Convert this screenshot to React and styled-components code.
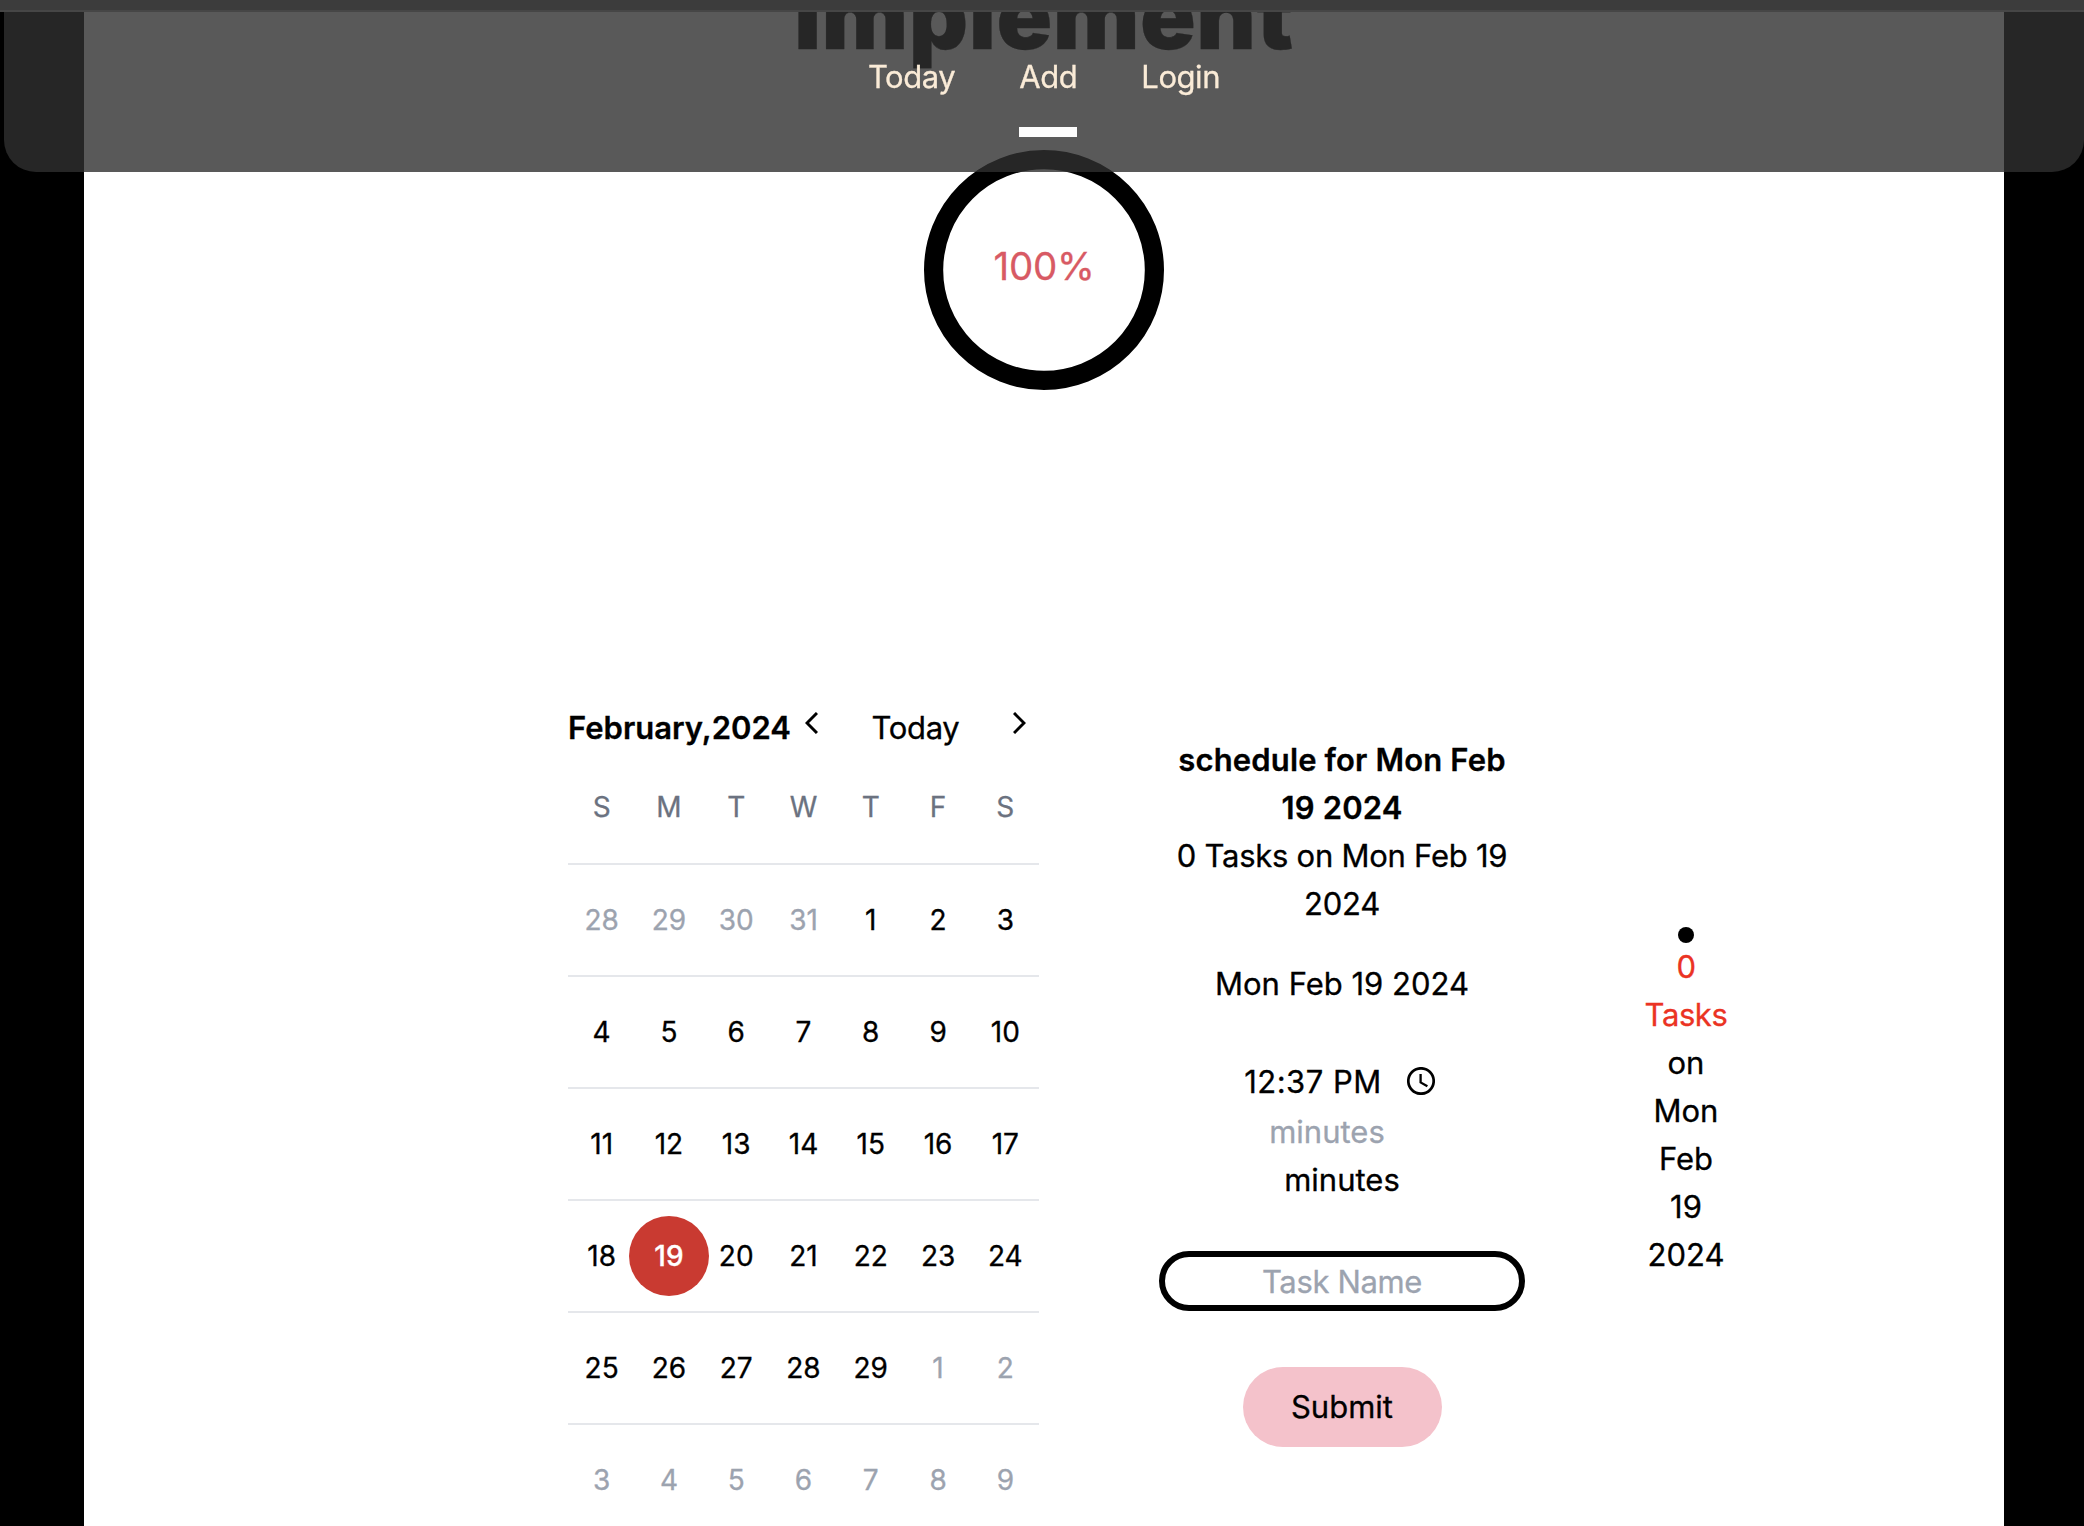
import React from "react";
import styled, { createGlobalStyle, css } from "styled-components";

const GlobalStyle = createGlobalStyle`
  * { box-sizing: border-box; }
  body {
    margin: 0;
    background: #000;
    color: #000;
    font-family: Inter, "Liberation Sans", sans-serif;
    font-size: 31px;
    line-height: 48px;
    -webkit-text-stroke: 0.3px currentColor;
  }
  button, input { font: inherit; letter-spacing: inherit; color: inherit; margin: 0; }
`;

const Page = styled.div`
  height: 1526px;
  padding: 0 80px 0 84px;
  overflow: hidden;
  background: #000;
`;

const Main = styled.main`
  height: 1526px;
  background: #fff;
`;

const WindowEdge = styled.div`
  position: fixed;
  inset: 0 0 auto 0;
  height: 12px;
  background: #3c3c3c;
  border-bottom: 2px solid #464646;
  z-index: 3;
`;

const Nav = styled.nav`
  position: fixed;
  top: 12px;
  left: 4px;
  right: 0;
  height: 160px;
  padding-top: 41px;
  display: flex;
  justify-content: center;
  align-items: flex-start;
  gap: 64px;
  border-radius: 0 0 32px 32px;
  background: rgba(48, 48, 48, 0.8);
  z-index: 2;
`;

const NavLink = styled.a`
  height: 84px;
  color: #faebd7;
  letter-spacing: -0.45px;
  border-bottom: 10px solid ${(p) => (p.$active ? "#fcfcfc" : "transparent")};
`;

const Heading = styled.h1`
  margin: 0;
  height: 150px;
  overflow: hidden;
  line-height: 32px;
  font-size: 92px;
  font-weight: 900;
  letter-spacing: 0.5px;
  text-align: center;
`;

const Ring = styled.svg`
  display: block;
  width: 240px;
  height: 240px;
  margin: 0 auto;
`;

const Percent = styled.text`
  font-size: 38.5px;
  letter-spacing: -0.3px;
  text-anchor: middle;
  fill: #d85a64;
  stroke: #d85a64;
  stroke-width: 0.3px;
`;

const Columns = styled.div`
  display: flex;
  align-items: flex-start;
  padding: 314px 0 0 484px;
`;

const Calendar = styled.section`
  flex: 0 0 471px;
`;

const MonthBar = styled.header`
  display: flex;
  align-items: flex-start;
  height: 48px;
`;

const MonthName = styled.h2`
  margin: 0 15px 0 0;
  width: 222px;
  font-size: 31px;
  font-weight: 600;
  white-space: nowrap;
`;

const Chevron = styled.svg`
  width: 13px;
  height: 22px;
  margin-top: 8px;
  fill: none;
  stroke: #000;
  stroke-width: 3;
`;

const TodayButton = styled.button`
  width: 195px;
  padding: 0;
  border: 0;
  background: none;
  text-align: center;
  letter-spacing: -0.35px;
`;

const Week = styled.div`
  display: grid;
  grid-template-columns: repeat(7, minmax(0, 1fr));
  font-size: 28px;
`;

const Weekday = styled.div`
  height: 111px;
  padding-top: 31px;
  text-align: center;
  color: #6b7280;
`;

const DayCell = styled.div`
  height: 112px;
  padding-top: 15px;
  border-top: 2px solid #e5e7eb;
  display: flex;
  justify-content: center;
`;

const Day = styled.span`
  flex: 0 0 80px;
  height: 80px;
  line-height: 80px;
  border-radius: 50%;
  text-align: center;
  color: ${(p) => (p.$outside ? "#9ca3af" : "#000")};
  ${(p) => p.$selected && css`
    background: #c93a31;
    color: #fff;
    font-weight: 500;
  `}
`;

const Form = styled.form`
  flex: 0 0 366px;
  margin: 32px 0 0 120px;
  display: flex;
  flex-direction: column;
  align-items: center;
  text-align: center;
`;

const FormTitle = styled.h2`
  margin: 0;
  font-size: 31px;
  font-weight: 600;
  letter-spacing: 0.15px;
`;

const Line = styled.div`
  margin-top: ${(p) => p.$top || 0}px;
  margin-left: ${(p) => p.$left || 0}px;
  letter-spacing: ${(p) => p.$track || 0}px;
  white-space: nowrap;
  color: ${(p) => p.$color || "inherit"};
`;

const TimeRow = styled.div`
  display: flex;
  align-items: center;
  gap: 25px;
  margin-top: 50px;
  margin-left: -5px;
`;

const TimeParts = styled.span`
  white-space: nowrap;
  letter-spacing: 0.5px;
`;

const Clock = styled.svg`
  width: 28px;
  height: 28px;
  margin-top: -2px;
  fill: none;
  stroke: #000;
  stroke-width: 2.7;
`;

const TaskInput = styled.input`
  width: 366px;
  height: 60px;
  margin-top: 47px;
  padding: 0;
  border: 6px solid #000;
  border-radius: 30px;
  background: #fff;
  text-align: center;
  outline: none;
  letter-spacing: -0.35px;
  &::placeholder { color: #9ca3af; opacity: 1; }
`;

const Submit = styled.button`
  width: 199px;
  height: 80px;
  margin-top: 56px;
  padding: 0;
  border: 0;
  border-radius: 40px;
  background: #f4c2cb;
`;

const Summary = styled.aside`
  flex: 0 0 84px;
  margin: 223px 0 0 119px;
  display: flex;
  flex-direction: column;
  align-items: center;
  text-align: center;
`;

const Dot = styled.span`
  width: 16px;
  height: 16px;
  border-radius: 50%;
  background: #000;
`;

const days = [
  28, 29, 30, 31, 1, 2, 3,
  4, 5, 6, 7, 8, 9, 10,
  11, 12, 13, 14, 15, 16, 17,
  18, 19, 20, 21, 22, 23, 24,
  25, 26, 27, 28, 29, 1, 2,
  3, 4, 5, 6, 7, 8, 9,
];

export default function App() {
  return (
    <>
      <GlobalStyle />
      <WindowEdge />
      <Nav>
        <NavLink>Today</NavLink>
        <NavLink $active>Add</NavLink>
        <NavLink>Login</NavLink>
      </Nav>
      <Page>
        <Main>
          <Heading>Implement</Heading>
          <Ring viewBox="0 0 240 240">
            <circle cx="120" cy="120" r="110.4" fill="none" stroke="#000" strokeWidth="19.2" />
            <Percent x="120" y="130">100%</Percent>
          </Ring>
          <Columns>
            <Calendar>
              <MonthBar>
                <MonthName>February,2024</MonthName>
                <Chevron viewBox="0 0 13 22"><path d="M12 1 2 11l10 10" /></Chevron>
                <TodayButton>Today</TodayButton>
                <Chevron viewBox="0 0 13 22"><path d="m1 1 10 10L1 21" /></Chevron>
              </MonthBar>
              <Week>
                {["S", "M", "T", "W", "T", "F", "S"].map((d, i) => (
                  <Weekday key={i}>{d}</Weekday>
                ))}
                {days.map((d, i) => (
                  <DayCell key={i}>
                    <Day $outside={i < 4 || i > 32} $selected={i === 22}>{d}</Day>
                  </DayCell>
                ))}
              </Week>
            </Calendar>
            <Form>
              <FormTitle>schedule for Mon Feb<br />19 2024</FormTitle>
              <Line $track={-0.25}>0 Tasks on Mon Feb 19<br />2024</Line>
              <Line $top={32}>Mon Feb 19 2024</Line>
              <TimeRow>
                <TimeParts>12:37 PM</TimeParts>
                <Clock viewBox="0 0 28 28">
                  <circle cx="14" cy="14" r="12.7" />
                  <path d="M13.6 7v8.4l6.8 3.9" strokeWidth="2.3" />
                </Clock>
              </TimeRow>
              <Line $top={2} $left={-30} $color="#9ca3af">minutes</Line>
              <Line>minutes</Line>
              <TaskInput placeholder="Task Name" />
              <Submit type="button">Submit</Submit>
            </Form>
            <Summary>
              <Dot />
              <Line $color="#eb3323" $track={-0.4}>0<br />Tasks</Line>
              <Line>on<br />Mon<br />Feb<br />19<br />2024</Line>
            </Summary>
          </Columns>
        </Main>
      </Page>
    </>
  );
}
